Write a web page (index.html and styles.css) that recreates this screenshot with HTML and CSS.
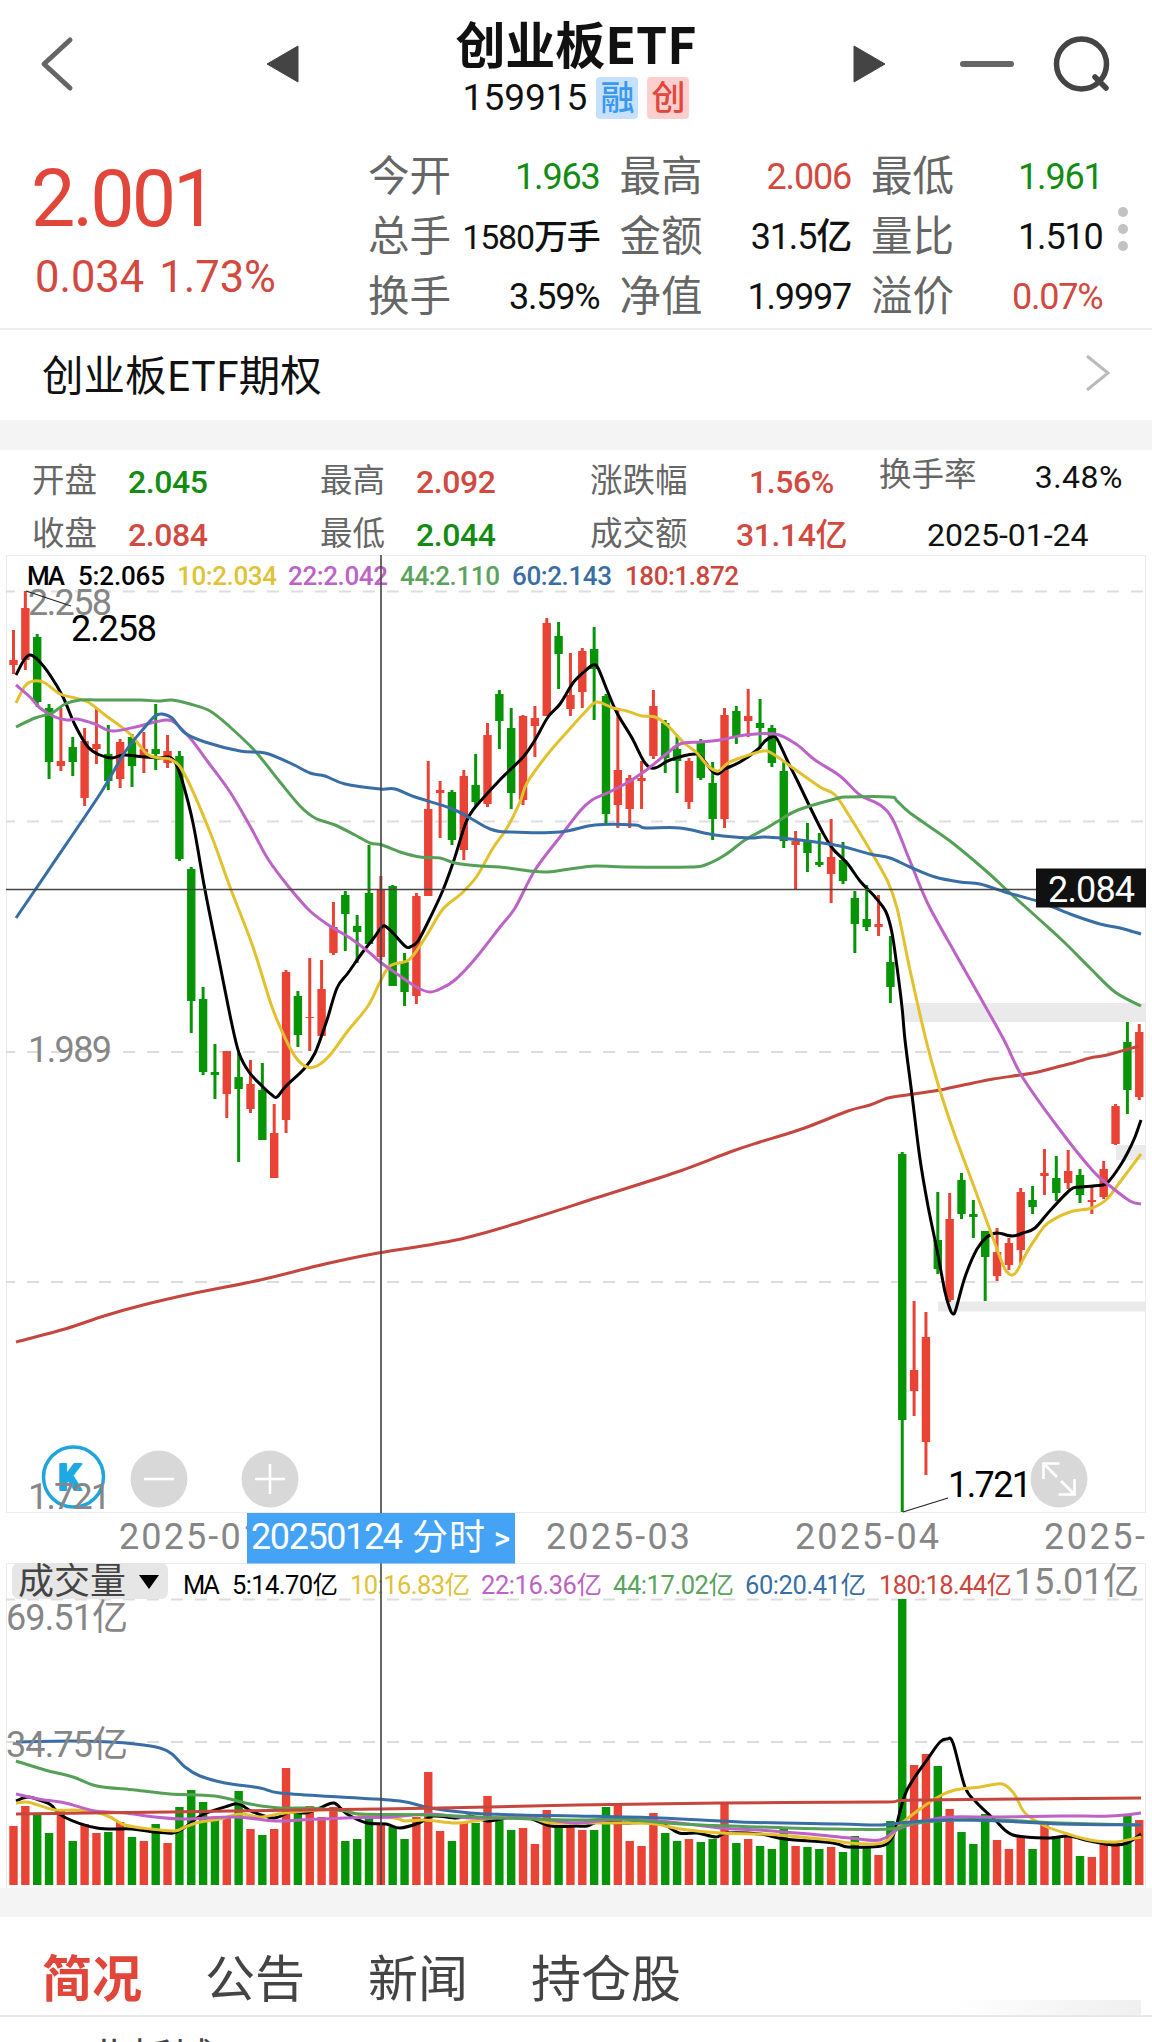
FILE: index.html
```html
<!DOCTYPE html>
<html lang="zh-Hans">
  <head>
    <meta charset="UTF-8" />
    <title>创业板ETF 159915</title>
    <link rel="stylesheet" href="styles.css">
  </head>
  <body>
    <header class="top">
      <svg class="nav-left" width="340" height="128" viewBox="0 0 340 128">
        <path class="back" d="M70 40 L44 64 L70 88" />
        <path class="tri" d="M267 64 L298 46 V82 Z" />
      </svg>
      <div class="title">
        <h1>创业板ETF</h1>
        <div class="code">
          <span class="num">159915</span>
          <span class="tag tag-blue">融</span>
          <span class="tag tag-red">创</span>
        </div>
      </div>
      <svg class="nav-right" width="340" height="128" viewBox="812 0 340 128">
        <path class="tri" d="M885 64 L854 46 V82 Z" />
        <path class="minus" d="M963 64 H1011" />
        <circle class="search" cx="1081.5" cy="64" r="25" />
        <path class="search" d="M1095 77 L1106 88" />
      </svg>
    </header>

    <section class="quote">
      <div class="price">
        <div class="now">2.001</div>
        <div class="change"><span>0.034</span><span>1.73%</span></div>
      </div>
      <div class="stats">
        <div><label>今开</label><b class="green">1.963</b></div>
        <div><label>最高</label><b class="red">2.006</b></div>
        <div><label>最低</label><b class="green">1.961</b></div>
        <div><label>总手</label><b class="tight">1580万手</b></div>
        <div><label>金额</label><b>31.5亿</b></div>
        <div><label>量比</label><b>1.510</b></div>
        <div><label>换手</label><b>3.59%</b></div>
        <div><label>净值</label><b>1.9997</b></div>
        <div><label>溢价</label><b class="red">0.07%</b></div>
      </div>
      <div class="dots"><i></i><i></i><i></i></div>
    </section>

    <section class="option">
      <span>创业板ETF期权</span>
      <svg width="28" height="40" viewBox="0 0 28 40"><path d="M3 3 L24 20 L3 37" /></svg>
    </section>

    <section class="day">
      <div><label>开盘</label><b class="green">2.045</b></div>
      <div><label>最高</label><b class="red">2.092</b></div>
      <div class="wide"><label>涨跌幅</label><b class="red">1.56%</b></div>
      <div class="last"><label>换手率</label><b>3.48%</b></div>
      <div><label>收盘</label><b class="red">2.084</b></div>
      <div><label>最低</label><b class="green">2.044</b></div>
      <div class="wide"><label>成交额</label><b class="red">31.14亿</b></div>
      <div class="date">2025-01-24</div>
    </section>

    <svg class="chart" width="1152" height="1333" viewBox="0 555 1152 1333">
      <g class="frame">
        <rect x="6.5" y="555.5" width="1139" height="957" />
        <path d="M6.5 1888 V1563.5 H1145.5 V1888" />
      </g>
      <g class="grid">
        <path d="M6 591.5 H1146 M6 821.5 H1146 M6 1052 H1146 M6 1282 H1146" />
        <path d="M6 1599.5 H1146 M6 1742 H1146" />
      </g>
      <g class="gap">
        <rect x="904" y="1003" width="242" height="19" />
        <rect x="938" y="1301.5" width="208" height="10" />
        <rect x="1116" y="1145" width="30" height="15" />
      </g>

      <g class="axis">
        <text x="28" y="615" textLength="84">2.258</text>
        <text x="28" y="1062" textLength="84">1.989</text>
        <text x="119" y="1549" textLength="144">2025-01</text>
        <text x="546" y="1549" textLength="144">2025-03</text>
        <text x="795" y="1549" textLength="144">2025-04</text>
        <text x="1044" y="1549" textLength="101">2025-</text>
      </g>

      <g id="candles"></g>
      <g id="volumes"></g>
      <g id="lines"></g>

      <path class="pointer" d="M26 591 L71 606 M903 1512 L948 1498" />
      <g class="extreme">
        <text x="71" y="641" textLength="86">2.258</text>
        <text x="948" y="1497" textLength="84">1.721</text>
      </g>

      <circle class="k-ring" cx="73.5" cy="1477" r="30" />
      <text class="k-text" x="58" y="1490">K</text>
      <g class="axis">
        <text x="28" y="1509" textLength="83">1.721</text>
        <text x="6" y="1630" textLength="122">69.51亿</text>
        <text x="6" y="1757" textLength="122">34.75亿</text>
        <text x="1014" y="1594" textLength="125">15.01亿</text>
      </g>
      <g class="round">
        <circle cx="159" cy="1479" r="28.5" />
        <circle cx="270" cy="1479" r="28.5" />
        <circle cx="1059" cy="1479" r="28.5" />
        <path d="M144 1479 H174 M255 1479 H285 M270 1464 V1494" />
        <path d="M1059.500 1463.500 H1043.500 V1479 M1043.500 1463.500 L1057 1477 M1061 1481 L1074.500 1494.500 M1058.500 1494.500 H1074.500 V1479" />
      </g>

      <g class="ma">
        <text x="27" y="585" textLength="38">MA</text>
        <text x="78" y="585" textLength="87">5:2.065</text>
        <text class="c10" x="177" y="585" textLength="100">10:2.034</text>
        <text class="c22" x="288" y="585" textLength="100">22:2.042</text>
        <text class="c44" x="400" y="585" textLength="100">44:2.110</text>
        <text class="c60" x="512" y="585" textLength="100">60:2.143</text>
        <text class="c180" x="625" y="585" textLength="114">180:1.872</text>
      </g>

      <rect class="chip" x="12" y="1563" width="156" height="36" rx="7" />
      <text class="chip-text" x="18" y="1594">成交量</text>
      <path d="M139 1575 H159 L149 1589 Z" />
      <g class="ma vol">
        <text x="183" y="1594" textLength="37">MA</text>
        <text x="232" y="1594" textLength="106">5:14.70亿</text>
        <text class="c10" x="350" y="1594" textLength="120">10:16.83亿</text>
        <text class="c22" x="481" y="1594" textLength="121">22:16.36亿</text>
        <text class="c44" x="613" y="1594" textLength="121">44:17.02亿</text>
        <text class="c60" x="745" y="1594" textLength="121">60:20.41亿</text>
        <text class="c180" x="879" y="1594" textLength="133">180:18.44亿</text>
      </g>

      <!-- 十字光标 -->
      <path class="cross" d="M381 555 V1885 M6 889.5 H1036" />
      <rect x="1036" y="868.5" width="110" height="39" fill="#111" />
      <text class="cross-price" x="1048" y="902" textLength="87">2.084</text>
      <rect x="247" y="1513" width="268" height="50.500" fill="#44a3f5" />
      <g class="cross-date">
        <text x="251" y="1549" textLength="152">20250124</text>
        <text x="412" y="1550" textLength="73">分时</text>
        <text class="arrow" x="494" y="1549">&gt;</text>
      </g>
    </svg>

    <nav class="tabs">
      <a class="active">简况</a>
      <a>公告</a>
      <a>新闻</a>
      <a>持仓股</a>
      <span class="shade"></span>
    </nav>
    <div class="content">业板城</div>

    <script src="chart.js"></script>
  </body>
</html>
```
FILE: styles.css
```css
* {
  box-sizing: border-box;
}
body {
  margin: 0;
  width: 1152px;
  height: 2042px;
  overflow: hidden;
  background: #fff;
  color: #111;
  font-family: Roboto, "Noto Sans CJK SC", sans-serif;
}
b {
  font-weight: 400;
}
.red {
  color: #d2493f;
}
.green {
  color: #128c12;
}

/* 顶部 */
.top {
  display: flex;
  justify-content: space-between;
  height: 128px;
}
.title {
  padding-top: 14px;
  text-align: center;
}
.title h1 {
  margin: 0;
  height: 63px;
  font-size: 50px;
  line-height: 57px;
  font-family: "Noto Sans CJK SC", sans-serif;
  font-weight: 700;
  white-space: nowrap;
}
.code {
  display: flex;
  justify-content: center;
  gap: 9px;
  height: 42px;
  line-height: 42px;
}
.num {
  font-size: 37px;
}
.tag {
  width: 42px;
  border-radius: 4px;
  font-size: 34px;
  line-height: 42px;
  font-weight: 500;
}
.tag-blue {
  background: #c5e1fb;
  color: #3a98ef;
}
.tag-red {
  background: #fbcfcd;
  color: #e2463c;
}
.back,
.minus,
.search {
  fill: none;
  stroke: #666;
  stroke-width: 5;
  stroke-linecap: round;
  stroke-linejoin: round;
}
.minus {
  stroke-width: 6;
}
.search {
  stroke: #444;
  stroke-width: 5.5;
}
.tri {
  fill: #444;
  stroke: #444;
  stroke-linejoin: round;
}

/* 行情 */
.quote {
  display: flex;
  height: 202px;
  border-bottom: 2px solid #eee;
}
.price {
  width: 368px;
  padding: 25px 0 0 31px;
  color: #e2463a;
}
.now {
  height: 92px;
  font-size: 79px;
  line-height: 92px;
  font-weight: 450;
  letter-spacing: -3px;
}
.change {
  display: flex;
  gap: 15px;
  padding: 8px 0 0 4px;
  font-size: 43.5px;
  line-height: 50px;
  font-weight: 450;
  color: #d2493f;
}
.stats {
  display: grid;
  grid-template-columns: repeat(3, 231.5px);
  grid-auto-rows: 60px;
  column-gap: 20px;
  padding-top: 19px;
}
.stats div {
  display: flex;
  justify-content: space-between;
  line-height: 60px;
  white-space: nowrap;
}
.stats label {
  font-size: 41.5px;
  color: #666;
}
.stats b {
  font-size: 36px;
  font-weight: 450;
  letter-spacing: -1.2px;
}
.stats .tight {
  font-size: 34px;
}
.dots {
  display: flex;
  flex-direction: column;
  gap: 7px;
  padding: 79px 0 0 15px;
}
.dots i {
  width: 10px;
  height: 10px;
  border-radius: 50%;
  background: #c2c2c2;
}
.option {
  display: flex;
  align-items: center;
  justify-content: space-between;
  height: 90px;
  padding: 0 40px 4px 42px;
  font-size: 41.5px;
  font-family: "Noto Sans CJK SC", sans-serif;
}
.option svg {
  fill: none;
  stroke: #bbb;
  stroke-width: 3;
}

/* 当日数据 */
.day {
  display: grid;
  grid-template-columns: 288px 270px 289px 244px;
  grid-auto-rows: 53px;
  height: 135px;
  padding: 5px 0 0 32px;
  border-top: 30px solid #f4f4f4;
}
.day div {
  display: flex;
  gap: 31px;
  line-height: 53px;
  white-space: nowrap;
}
.day label {
  font-size: 32.5px;
  color: #666;
}
.day b {
  padding-top: 1px;
  font-size: 32px;
  font-weight: 500;
  letter-spacing: -0.4px;
}
.day .wide b {
  width: 112px;
  text-align: center;
}
.day .wide {
  gap: 48px;
}
.day .last {
  line-height: 41px;
  justify-content: space-between;
}
.day .last b {
  padding-top: 2px;
  font-weight: 400;
  letter-spacing: 0.5px;
}
.day .date {
  padding: 1px 0 0 48px;
  font-size: 32px;
}

/* K线图 */
.chart {
  display: block;
}
.chart text {
  font-size: 36px;
}
.frame {
  fill: none;
  stroke: #ececec;
}
.grid {
  fill: none;
  stroke: #ddd;
  stroke-width: 2;
  stroke-dasharray: 12 12;
  stroke-dashoffset: 3;
}
.gap {
  fill: #eaeaea;
}
.axis {
  fill: #868686;
}
.up {
  fill: #e94335;
  stroke: #e94335;
}
.down {
  fill: #079507;
  stroke: #079507;
}
.wick {
  stroke-width: 3;
}
.body {
  stroke: none;
}
#lines path {
  fill: none;
  stroke-width: 3;
}
#lines .c5 {
  stroke: #000;
}
#lines .c10 {
  stroke: #e3c02d;
}
#lines .c22 {
  stroke: #bd62c6;
}
#lines .c44 {
  stroke: #55a057;
}
#lines .c60 {
  stroke: #386ea5;
}
#lines .c180 {
  stroke: #c4463e;
}
.pointer {
  stroke: #222;
  stroke-width: 1.2;
}
.k-ring {
  fill: none;
  stroke: #1fa5dc;
  stroke-width: 3.5;
}
.chart .k-text {
  font-size: 36px;
  font-weight: 800;
  fill: #1fa9e4;
  stroke: #1fa9e4;
  stroke-width: 2;
  stroke-linejoin: round;
}
.round circle {
  fill: #d8d8d8;
}
.round path {
  fill: none;
  stroke: #fff;
  stroke-width: 2.6;
}
.chart .ma text {
  font-size: 26px;
  font-weight: 500;
}
.chart .vol text {
  font-size: 25.5px;
  font-weight: 400;
}
text.c10 {
  fill: #dfc236;
}
text.c22 {
  fill: #bd62c6;
}
text.c44 {
  fill: #5aa35c;
}
text.c60 {
  fill: #386ea5;
}
text.c180 {
  fill: #cb463c;
}
.chip {
  fill: #e6e6e6;
}
.chip-text {
  fill: #444;
}
.cross {
  fill: none;
  stroke: #444;
  stroke-width: 1.6;
}
.cross-price,
.cross-date {
  fill: #fff;
}
.chart .arrow {
  font-size: 31px;
  font-weight: 500;
}

/* 底部 */
.tabs {
  display: flex;
  gap: 63px;
  height: 129px;
  padding-left: 42px;
  border-top: 29px solid #f4f4f4;
  border-bottom: 2px solid #e9e9e9;
  font-size: 50px;
  line-height: 127px;
  color: #444;
}
.tabs .active {
  font-weight: 700;
  color: #e2463a;
}
.tabs .shade {
  width: 190px;
  height: 15px;
  margin: 83px 11px 0 auto;
  background: linear-gradient(to right, #fff, #efefef);
}
.content {
  padding-left: 88px;
  font-size: 42px;
  line-height: 85px;
  color: #444;
}
```
FILE: chart.js
```js
// 涨跌, 最高, 实体上沿, 实体下沿, 最低, 成交量柱顶
const bars = [
  ["r", 630, 660, 665, 674, 1826],
  ["r", 591, 608, 660, 670, 1806],
  ["g", 634, 637, 702, 707, 1813],
  ["g", 704, 708, 762, 779, 1833],
  ["r", 708, 761, 766, 771, 1809],
  ["g", 737, 747, 762, 776, 1841],
  ["r", 728, 741, 798, 806, 1824],
  ["r", 708, 744, 749, 764, 1833],
  ["g", 725, 754, 781, 790, 1832],
  ["r", 739, 742, 779, 788, 1822],
  ["g", 734, 737, 766, 787, 1837],
  ["r", 732, 749, 757, 773, 1841],
  ["g", 704, 749, 754, 770, 1824],
  ["r", 735, 751, 763, 768, 1843],
  ["g", 751, 756, 859, 861, 1807],
  ["g", 867, 869, 1001, 1033, 1790],
  ["g", 987, 999, 1072, 1075, 1802],
  ["g", 1044, 1072, 1075, 1099, 1818],
  ["r", 1051, 1051, 1094, 1118, 1818],
  ["g", 1053, 1077, 1089, 1162, 1791],
  ["r", 1060, 1084, 1109, 1113, 1829],
  ["g", 1063, 1090, 1140, 1140, 1835],
  ["r", 1104, 1133, 1178, 1178, 1829],
  ["r", 970, 972, 1120, 1133, 1768],
  ["g", 991, 996, 1035, 1047, 1813],
  ["r", 958, 1017, 1018, 1051, 1806],
  ["r", 960, 989, 1036, 1036, 1817],
  ["r", 902, 927, 953, 955, 1807],
  ["g", 891, 895, 914, 951, 1841],
  ["g", 915, 926, 932, 963, 1839],
  ["g", 845, 893, 944, 944, 1818],
  ["r", 876, 889, 957, 960, 1823],
  ["g", 885, 886, 986, 986, 1827],
  ["g", 953, 962, 992, 1006, 1839],
  ["r", 893, 896, 996, 1004, 1817],
  ["r", 761, 809, 896, 896, 1772],
  ["r", 781, 790, 793, 838, 1831],
  ["g", 790, 792, 840, 845, 1841],
  ["r", 770, 776, 850, 860, 1823],
  ["g", 754, 785, 802, 807, 1823],
  ["r", 723, 735, 804, 807, 1796],
  ["g", 690, 694, 721, 749, 1820],
  ["g", 708, 728, 793, 809, 1830],
  ["r", 715, 716, 800, 805, 1828],
  ["r", 706, 718, 726, 757, 1844],
  ["r", 618, 623, 716, 716, 1810],
  ["g", 622, 636, 654, 689, 1825],
  ["r", 653, 695, 709, 716, 1825],
  ["r", 648, 651, 692, 708, 1830],
  ["g", 627, 649, 669, 720, 1830],
  ["g", 694, 696, 814, 823, 1807],
  ["r", 708, 770, 805, 828, 1803],
  ["r", 775, 778, 809, 828, 1841],
  ["r", 761, 778, 781, 809, 1846],
  ["r", 690, 706, 756, 759, 1813],
  ["g", 720, 723, 758, 773, 1833],
  ["g", 735, 749, 761, 793, 1841],
  ["r", 758, 761, 802, 809, 1839],
  ["g", 739, 742, 778, 780, 1842],
  ["g", 762, 783, 819, 840, 1839],
  ["r", 708, 715, 819, 828, 1803],
  ["g", 706, 711, 736, 744, 1843],
  ["r", 689, 716, 721, 737, 1839],
  ["g", 699, 723, 728, 749, 1846],
  ["g", 725, 728, 763, 767, 1849],
  ["g", 762, 771, 841, 848, 1827],
  ["r", 831, 841, 845, 889, 1846],
  ["g", 823, 841, 853, 872, 1847],
  ["g", 833, 862, 865, 867, 1849],
  ["r", 819, 857, 874, 903, 1847],
  ["g", 842, 860, 881, 884, 1852],
  ["g", 891, 898, 924, 953, 1836],
  ["g", 885, 919, 927, 931, 1847],
  ["r", 895, 924, 927, 936, 1855],
  ["g", 936, 962, 987, 1003, 1821],
  ["g", 1152, 1154, 1420, 1512, 1599],
  ["r", 1301, 1370, 1391, 1416, 1765],
  ["r", 1312, 1337, 1442, 1475, 1754],
  ["g", 1192, 1240, 1269, 1274, 1766],
  ["r", 1193, 1219, 1300, 1302, 1809],
  ["g", 1173, 1180, 1214, 1219, 1832],
  ["g", 1200, 1214, 1217, 1238, 1844],
  ["g", 1231, 1231, 1257, 1301, 1814],
  ["r", 1228, 1252, 1276, 1281, 1840],
  ["r", 1238, 1243, 1265, 1270, 1849],
  ["r", 1188, 1192, 1250, 1265, 1836],
  ["g", 1186, 1200, 1207, 1214, 1849],
  ["r", 1149, 1173, 1176, 1195, 1825],
  ["g", 1156, 1178, 1193, 1201, 1836],
  ["r", 1150, 1171, 1183, 1189, 1836],
  ["g", 1169, 1175, 1195, 1203, 1856],
  ["r", 1187, 1200, 1202, 1214, 1857],
  ["r", 1161, 1169, 1197, 1199, 1844],
  ["r", 1104, 1106, 1144, 1145, 1843],
  ["g", 1022, 1042, 1090, 1114, 1815],
  ["r", 1024, 1032, 1097, 1100, 1820],
];

const lines = [
  // 价格均线
  ["c180", "16,1342 65,1329 104,1316 143,1305 195,1293 260,1280 325,1264 378,1253 456,1240 521,1222 599,1197 677,1172 730,1152 760,1142 783,1135 810,1126 848,1111 870,1105 888,1098 907,1095 940,1090 973,1083 993,1079 1033,1073 1057,1067 1073,1063 1090,1058 1107,1055 1139,1046"],
  ["c5", "16,675 24,660 30,655 38,660 50,675 63,697 75,725 88,747 100,755 112,758 124,755 145,757 160,758 168,757 175,762 182,780 193,823 205,890 219,960 231,1020 239,1053 249,1072 262,1086 272,1095 277,1097 286,1086 304,1069 315,1053 327,1020 337,988 348,973 362,953 373,939 381,928 385,926 393,933 405,946 410,947 418,941 430,918 443,890 454,860 465,825 473,810 497,783 510,770 524,756 535,740 548,717 560,704 573,683 585,671 593,665 598,668 607,690 617,713 632,738 645,763 655,768 670,760 695,754 702,758 712,771 718,774 725,769 740,762 757,750 765,741 772,737 777,739 788,762 798,782 810,807 823,833 833,849 847,863 860,881 875,897 886,912 892,933 897,967 902,1007 905,1040 912,1095 920,1159 928,1206 937,1250 945,1292 950,1309 953,1314 956,1309 965,1277 977,1249 987,1237 997,1233 1012,1236 1023,1233 1035,1228 1048,1213 1070,1190 1080,1187 1103,1185 1109,1181 1120,1166 1128,1152 1135,1137 1141,1120"],
  ["c10", "16,703 25,686 34,681 45,683 60,694 75,698 88,702 105,715 130,734 147,754 160,758 172,760 185,775 210,832 230,887 253,947 272,1007 287,1042 297,1059 307,1067 317,1066 330,1055 347,1032 368,1006 380,982 390,966 407,961 415,953 427,935 443,909 462,893 477,876 493,848 507,828 520,802 527,783 547,755 567,732 587,710 597,702 613,708 627,711 642,716 655,717 667,725 683,742 697,753 708,766 718,771 728,763 743,757 763,751 773,754 793,768 820,787 835,795 850,817 870,850 887,880 897,908 910,970 926,1040 938,1084 953,1130 970,1176 990,1230 1003,1265 1008,1273 1012,1275 1017,1271 1027,1252 1038,1235 1048,1223 1070,1212 1092,1208 1107,1199 1120,1182 1141,1154"],
  ["c22", "16,685 30,697 40,708 55,717 67,720 77,719 95,724 112,731 140,726 155,722 172,721 190,738 208,762 230,792 250,826 268,859 288,886 310,911 330,926 350,938 370,953 380,962 400,976 410,983 420,989 430,992 440,989 455,980 475,959 500,927 515,908 535,870 560,837 580,811 592,800 605,794 625,784 645,771 665,755 680,744 700,742 720,740 745,735 775,734 796,744 815,760 840,776 860,795 880,805 893,820 910,861 928,904 955,953 980,997 1004,1040 1023,1078 1060,1130 1093,1171 1110,1186 1130,1201 1141,1204"],
  ["c44", "16,727 35,718 52,713 65,704 80,700 100,700 140,700 158,701 172,700 190,704 210,711 230,727 255,751 280,782 300,806 315,818 335,825 355,835 370,843 382,845 400,852 420,857 440,858 455,863 480,866 500,867 530,871 548,872 570,869 595,866 625,867 690,867 705,865 725,855 745,840 765,829 780,820 798,810 835,799 848,797 890,797 897,801 910,813 950,841 985,870 1010,893 1040,920 1065,943 1090,968 1115,992 1141,1006"],
  ["c60", "16,918 50,868 100,794 125,752 145,727 155,716 162,714 172,718 185,733 205,742 240,751 265,753 290,763 310,773 325,776 345,784 380,789 395,789 415,797 450,808 470,818 490,829 510,832 560,832 595,825 635,825 645,828 680,828 715,835 750,838 765,837 800,840 840,846 870,854 890,858 910,867 935,877 960,882 980,884 1005,892 1040,902 1070,914 1100,924 1120,928 1141,934"],
  // 成交量均线
  ["c5", "16,1801 28,1797 42,1801 51,1805 64,1817 97,1828 132,1829 154,1832 173,1833 184,1828 202,1815 228,1806 239,1804 253,1812 274,1818 290,1812 305,1813 320,1808 334,1803 347,1814 367,1823 386,1824 400,1828 419,1823 433,1816 456,1818 470,1816 489,1821 511,1817 529,1818 551,1826 576,1826 587,1826 598,1822 620,1823 659,1823 679,1833 697,1833 716,1837 727,1833 760,1834 785,1839 833,1843 848,1847 881,1846 892,1838 897,1823 907,1790 929,1757 940,1742 947,1739 953,1743 965,1787 976,1802 995,1820 1013,1835 1050,1838 1068,1836 1090,1841 1114,1845 1127,1843 1141,1834"],
  ["c10", "16,1803 27,1802 38,1805 55,1810 75,1810 95,1812 110,1817 125,1825 150,1829 175,1831 185,1827 200,1822 220,1819 240,1814 260,1817 285,1813 320,1810 345,1810 360,1815 395,1818 405,1821 425,1820 455,1823 475,1821 500,1817 530,1818 550,1823 576,1823 620,1823 655,1824 680,1829 720,1833 760,1834 790,1836 830,1840 850,1843 875,1844 888,1840 900,1825 920,1809 940,1796 955,1790 980,1787 997,1784 1005,1785 1015,1795 1025,1813 1045,1826 1068,1834 1090,1840 1115,1842 1141,1837"],
  ["c22", "16,1794 38,1799 65,1803 95,1811 125,1813 155,1817 185,1819 235,1817 275,1821 300,1820 345,1818 390,1817 430,1814 470,1818 530,1818 576,1823 620,1819 670,1822 720,1828 760,1830 810,1834 850,1838 880,1840 900,1828 930,1820 950,1817 1000,1817 1060,1816 1110,1816 1141,1813"],
  ["c44", "16,1761 45,1770 73,1777 97,1786 135,1790 170,1794 215,1796 250,1804 280,1808 310,1808 345,1811 360,1814 430,1815 500,1818 576,1820 620,1819 680,1824 760,1827 830,1829 890,1829 910,1824 950,1820 1000,1820 1060,1823 1141,1825"],
  ["c60", "16,1742 70,1741 110,1742 135,1744 160,1748 172,1754 185,1767 200,1776 225,1783 260,1788 280,1793 340,1797 400,1801 430,1808 470,1813 520,1815 576,1816 660,1818 740,1822 840,1824 880,1825 910,1822 950,1820 1000,1821 1060,1824 1141,1825"],
  ["c180", "16,1814 170,1812 300,1810 440,1808 576,1805 720,1803 880,1802 920,1800 1141,1798"],
];

function smooth(str) {
  const p = str.split(" ").map((s) => s.split(",").map(Number));
  let d = "M" + p[0];
  for (let i = 0; i < p.length - 1; i++) {
    const a = p[i - 1] || p[i];
    const b = p[i];
    const c = p[i + 1];
    const e = p[i + 2] || c;
    d += ` C${b[0] + (c[0] - a[0]) / 6},${b[1] + (c[1] - a[1]) / 6}`;
    d += ` ${c[0] - (e[0] - b[0]) / 6},${c[1] - (e[1] - b[1]) / 6} ${c}`;
  }
  return d;
}

let candles = "";
let volumes = "";
bars.forEach(([color, high, top, bottom, low, vol], i) => {
  const x = 13.5 + i * 11.85;
  const cls = color === "r" ? "up" : "down";
  candles += `<g class="${cls}"><path class="wick" d="M${x} ${high} V${low}" />`;
  candles += `<rect class="body" x="${x - 4.2}" y="${top}" width="8.4" height="${bottom - top}" /></g>`;
  volumes += `<rect class="body ${cls}" x="${x - 4.2}" y="${vol}" width="8.4" height="${1885 - vol}" />`;
});
document.getElementById("candles").innerHTML = candles;
document.getElementById("volumes").innerHTML = volumes;
document.getElementById("lines").innerHTML = lines
  .map(([cls, pts]) => `<path class="${cls}" d="${smooth(pts)}" />`)
  .join("");
```
